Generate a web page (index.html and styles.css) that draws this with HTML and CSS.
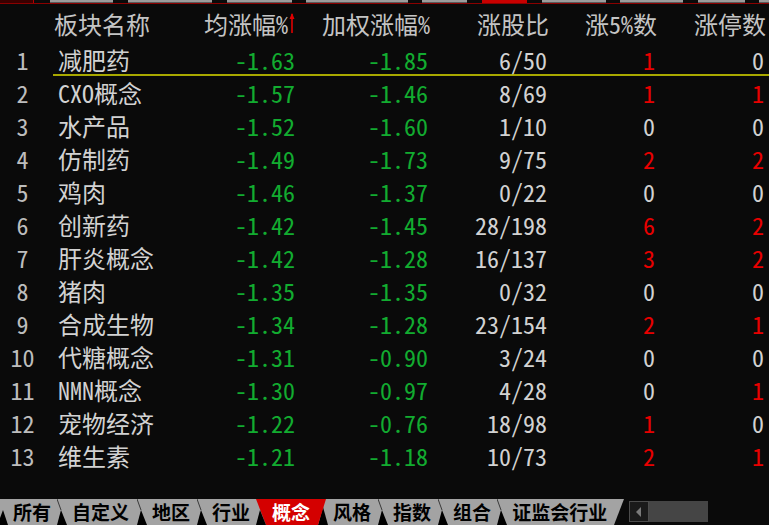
FILE: index.html
```html
<!DOCTYPE html>
<html lang="zh">
<head>
<meta charset="utf-8">
<link rel="stylesheet" href="styles.css">
</head>
<body>
<div class="screen">
  <div class="topstrip">
    <div class="seg seg-box w33"></div>
    <div class="seg seg-gray ml16 w63"></div>
    <div class="seg seg-gray ml15 w84"></div>
    <div class="seg seg-gray ml15 w65"></div>
    <div class="seg seg-gray ml14 w103"></div>
    <div class="seg seg-gray ml14 w45"></div>
    <div class="seg seg-red ml15 w45"></div>
    <div class="seg seg-gray ml15 w64"></div>
    <div class="seg seg-gray ml14 w63"></div>
    <div class="seg seg-gray ml15 w47"></div>
    <div class="seg seg-gray ml14 w10"></div>
  </div>
  <div class="redline"></div>

  <div class="table">
    <div class="row head">
      <div class="c-idx"></div>
      <div class="c-name">板块名称</div>
      <div class="c-num">均涨幅%<svg class="arrow" width="6" height="22" viewBox="0 0 6 22"><path d="M3 2 L3 21" stroke="#e00000" stroke-width="1.6"/><path d="M0.5 7 L3 1 L5.5 7 Z" fill="#e00000"/></svg></div>
      <div class="c-num c-h2">加权涨幅%</div>
      <div class="c-num c-h2">涨股比</div>
      <div class="c-num c-h2">涨5%数</div>
      <div class="c-num c-h2">涨停数</div>
    </div>

    <div class="row sel"><div class="c-idx">1</div><div class="c-name">减肥药</div><div class="c-num g">-1.63</div><div class="c-num g">-1.85</div><div class="c-num w">6/50</div><div class="c-num r">1</div><div class="c-num w">0</div></div>
    <div class="row"><div class="c-idx">2</div><div class="c-name">CXO概念</div><div class="c-num g">-1.57</div><div class="c-num g">-1.46</div><div class="c-num w">8/69</div><div class="c-num r">1</div><div class="c-num r">1</div></div>
    <div class="row"><div class="c-idx">3</div><div class="c-name">水产品</div><div class="c-num g">-1.52</div><div class="c-num g">-1.60</div><div class="c-num w">1/10</div><div class="c-num w">0</div><div class="c-num w">0</div></div>
    <div class="row"><div class="c-idx">4</div><div class="c-name">仿制药</div><div class="c-num g">-1.49</div><div class="c-num g">-1.73</div><div class="c-num w">9/75</div><div class="c-num r">2</div><div class="c-num r">2</div></div>
    <div class="row"><div class="c-idx">5</div><div class="c-name">鸡肉</div><div class="c-num g">-1.46</div><div class="c-num g">-1.37</div><div class="c-num w">0/22</div><div class="c-num w">0</div><div class="c-num w">0</div></div>
    <div class="row"><div class="c-idx">6</div><div class="c-name">创新药</div><div class="c-num g">-1.42</div><div class="c-num g">-1.45</div><div class="c-num w">28/198</div><div class="c-num r">6</div><div class="c-num r">2</div></div>
    <div class="row"><div class="c-idx">7</div><div class="c-name">肝炎概念</div><div class="c-num g">-1.42</div><div class="c-num g">-1.28</div><div class="c-num w">16/137</div><div class="c-num r">3</div><div class="c-num r">2</div></div>
    <div class="row"><div class="c-idx">8</div><div class="c-name">猪肉</div><div class="c-num g">-1.35</div><div class="c-num g">-1.35</div><div class="c-num w">0/32</div><div class="c-num w">0</div><div class="c-num w">0</div></div>
    <div class="row"><div class="c-idx">9</div><div class="c-name">合成生物</div><div class="c-num g">-1.34</div><div class="c-num g">-1.28</div><div class="c-num w">23/154</div><div class="c-num r">2</div><div class="c-num r">1</div></div>
    <div class="row"><div class="c-idx">10</div><div class="c-name">代糖概念</div><div class="c-num g">-1.31</div><div class="c-num g">-0.90</div><div class="c-num w">3/24</div><div class="c-num w">0</div><div class="c-num w">0</div></div>
    <div class="row"><div class="c-idx">11</div><div class="c-name">NMN概念</div><div class="c-num g">-1.30</div><div class="c-num g">-0.97</div><div class="c-num w">4/28</div><div class="c-num w">0</div><div class="c-num r">1</div></div>
    <div class="row"><div class="c-idx">12</div><div class="c-name">宠物经济</div><div class="c-num g">-1.22</div><div class="c-num g">-0.76</div><div class="c-num w">18/98</div><div class="c-num r">1</div><div class="c-num w">0</div></div>
    <div class="row"><div class="c-idx">13</div><div class="c-name">维生素</div><div class="c-num g">-1.21</div><div class="c-num g">-1.18</div><div class="c-num w">10/73</div><div class="c-num r">2</div><div class="c-num r">1</div></div>
  </div>

  <div class="tabbar">
    <svg class="sep" width="8" height="26" viewBox="0 0 8 26"><rect width="8" height="26" fill="#a3a3a3"/><polygon points="0,26 0,19 3,11 8,26" fill="#000"/></svg>
    <div class="tab">所有</div>
    <svg class="sep" width="10" height="26" viewBox="0 0 10 26"><rect width="10" height="26" fill="#a3a3a3"/><line x1="0" y1="0" x2="4" y2="11" stroke="#3a3a3a" stroke-width="1"/><polygon points="0,26 4,11 10,26" fill="#000"/></svg>
    <div class="tab pr8">自定义</div>
    <svg class="sep" width="10" height="26" viewBox="0 0 10 26"><rect width="10" height="26" fill="#a3a3a3"/><line x1="0" y1="0" x2="4" y2="11" stroke="#3a3a3a" stroke-width="1"/><polygon points="0,26 4,11 10,26" fill="#000"/></svg>
    <div class="tab pr7">地区</div>
    <svg class="sep" width="10" height="26" viewBox="0 0 10 26"><rect width="10" height="26" fill="#a3a3a3"/><line x1="0" y1="0" x2="4" y2="11" stroke="#3a3a3a" stroke-width="1"/><polygon points="0,26 4,11 10,26" fill="#000"/></svg>
    <div class="tab">行业</div>
    <svg class="sep" width="10" height="26" viewBox="0 0 10 26"><rect width="10" height="26" fill="#a3a3a3"/><polygon points="0,0 10,0 10,26" fill="#d40000"/><polygon points="0,26 4,11 10,26" fill="#000"/></svg>
    <div class="tab active">概念</div>
    <svg class="sep" width="13" height="26" viewBox="0 0 13 26"><rect width="13" height="26" fill="#a3a3a3"/><polygon points="3,26 8,8 13,26" fill="#000"/><polygon points="0,0 11,0 3,26 0,26" fill="#d40000"/></svg>
    <div class="tab pr7">风格</div>
    <svg class="sep" width="10" height="26" viewBox="0 0 10 26"><rect width="10" height="26" fill="#a3a3a3"/><line x1="0" y1="0" x2="4" y2="11" stroke="#3a3a3a" stroke-width="1"/><polygon points="0,26 4,11 10,26" fill="#000"/></svg>
    <div class="tab pr7">指数</div>
    <svg class="sep" width="10" height="26" viewBox="0 0 10 26"><rect width="10" height="26" fill="#a3a3a3"/><line x1="0" y1="0" x2="4" y2="11" stroke="#3a3a3a" stroke-width="1"/><polygon points="0,26 4,11 10,26" fill="#000"/></svg>
    <div class="tab">组合</div>
    <svg class="sep" width="10" height="26" viewBox="0 0 10 26"><rect width="10" height="26" fill="#a3a3a3"/><line x1="0" y1="0" x2="4" y2="11" stroke="#3a3a3a" stroke-width="1"/><polygon points="0,26 4,11 10,26" fill="#000"/></svg>
    <div class="tab">证监会行业</div>
    <svg class="sep" width="12" height="26" viewBox="0 0 12 26"><polygon points="0,0 11,0 1,26 0,26" fill="#a3a3a3"/></svg>
    <div class="scroll">
      <div class="sbtn"><svg width="6" height="10" viewBox="0 0 6 10"><polygon points="5,0 5,10 0,5" fill="#7a7a7a"/></svg></div>
      <div class="sthumb"></div>
    </div>
  </div>
</div>
</body>
</html>
```

FILE: styles.css
```css
html, body {
  margin: 0;
  padding: 0;
  background: #0a0a0a;
}
.screen {
  width: 769px;
  height: 525px;
  display: flex;
  flex-direction: column;
  background: #0a0a0a;
  overflow: hidden;
}
.topstrip {
  display: flex;
  height: 3px;
}
.seg { height: 3px; }
.seg-gray { background: #9c9c9c; border-bottom: 1px solid #5a5a5a; height: 2px; }
.seg-red { background: #c80000; }
.seg-box { background: #3a0000; border-right: 1px solid #b00000; }
.w10 { width: 10px; } .w33 { width: 33px; } .w45 { width: 45px; } .w47 { width: 47px; }
.w63 { width: 63px; } .w64 { width: 64px; } .w65 { width: 65px; } .w84 { width: 84px; }
.w103 { width: 103px; }
.ml14 { margin-left: 14px; } .ml15 { margin-left: 15px; } .ml16 { margin-left: 16px; }
.redline {
  height: 1px;
  background: #8a0000;
}
.table {
  display: flex;
  flex-direction: column;
  font-family: "Noto Sans Mono CJK SC", "Noto Sans CJK SC", "DejaVu Sans Mono", monospace;
  font-size: 24px;
  color: #d2d2d2;
}
.row {
  display: grid;
  grid-template-columns: 45px 150px 100px 133px 119px 108px 109px;
  height: 29px;
  line-height: 29px;
  padding-bottom: 4px;
  align-items: center;
}
.row.head {
  height: 39px;
  line-height: 39px;
  padding-bottom: 2px;
  color: #c4c4c4;
}
.row.sel {
  background: linear-gradient(#a8a800, #a8a800) no-repeat 53px 29px / 716px 2px;
}
.c-idx {
  text-align: center;
  color: #bdbdbd;
}
.c-name {
  padding-left: 13px;
  white-space: nowrap;
}
.head .c-name { padding-left: 9px; }
.c-num {
  display: flex;
  justify-content: flex-end;
  align-items: center;
  white-space: nowrap;
}
.head .c-h2 { margin-right: -2px; }
.arrow { margin-left: 1px; margin-top: -2px; }
.g { color: #12ac30; }
.r { color: #e80000; }
.w { color: #d2d2d2; }

.tabbar {
  margin-top: auto;
  height: 26px;
  display: flex;
  align-items: stretch;
  font-family: "Noto Sans CJK SC", sans-serif;
  font-weight: 700;
  font-size: 19px;
  line-height: 26px;
  color: #000;
}
.sep { display: block; flex: none; }
.tab {
  background: #a3a3a3;
  padding: 0 6px 0 5px;
  white-space: nowrap;
}
.tab.pr7 { padding-right: 7px; }
.tab.pr8 { padding-right: 8px; }
.tab.active {
  background: #d40000;
  color: #fff;
  padding: 0 5px 0 6px;
}
.scroll {
  display: flex;
  margin-left: 4px;
  padding: 2px 0 3px;
}
.sbtn {
  width: 18px;
  background: #1a1a1a;
  border: 1px solid #4c4c4c;
  display: flex;
  align-items: center;
  justify-content: center;
}
.sthumb {
  width: 59px;
  background: #454545;
}
```
